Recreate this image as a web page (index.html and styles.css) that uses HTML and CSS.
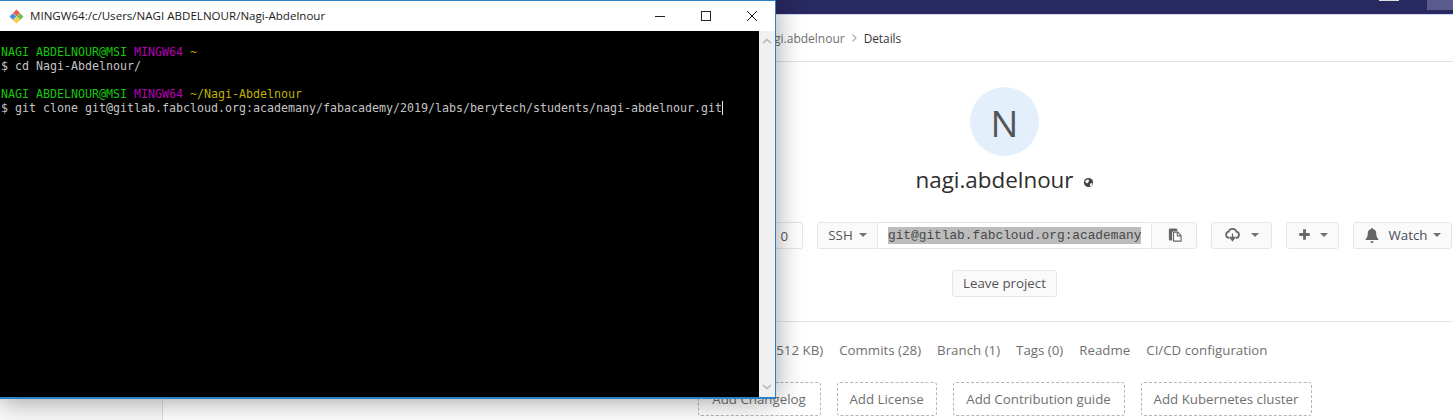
FILE: index.html
```html
<!DOCTYPE html>
<html lang="en">
<head>
<meta charset="utf-8">
<title>nagi.abdelnour · Details</title>
<link rel="stylesheet" href="styles.css">
</head>
<body>
<div class="desktop">
  <header class="navbar">
    <span class="nav-glint"></span>
    <span class="nav-avatar"></span>
  </header>
  <div class="layout">
    <aside class="sidebar"></aside>
    <main class="main">
      <nav class="crumbs">
        <span class="crumb">nagi.abdelnour</span>
        <svg class="crumb-sep" viewBox="0 0 8 10"><path d="M2.500 1.500 6 5 2.500 8.500" fill="none" stroke="#a5a5a5" stroke-width="1.100"/></svg>
        <strong class="crumb-current">Details</strong>
      </nav>
      <section class="hero">
        <div class="avatar">N</div>
        <h1 class="project-title">nagi.abdelnour
          <svg class="globe" viewBox="0 0 12 12"><circle cx="6" cy="6" r="5" fill="#444"/><path d="M3 3.500 6 2.500 6.500 5 4.500 7 2.500 5.500ZM8 7 10.500 6.500 9 10 7.500 9.500Z" fill="#fff"/></svg>
        </h1>
      </section>
      <div class="actions">
        <div class="group"><span class="btn">Star</span><span class="btn count">0</span></div>
        <div class="group"><span class="btn">Fork</span><span class="btn count">0</span></div>
        <div class="clone">
          <span class="btn ssh">SSH <i class="caret"></i></span>
          <span class="clone-url"><span class="selection">git@gitlab.fabcloud.org:academany</span></span>
          <span class="btn copy">
            <svg class="icon" viewBox="0 0 16 16"><path d="M2 3a1.500 1.500 0 0 1 1.500-1.500h6A1.500 1.500 0 0 1 11 3v1.500H7A1.500 1.500 0 0 0 5.500 6v8.500h-2A1.500 1.500 0 0 1 2 13Z" fill="#666"/><path d="M7 5.500h4.500L15 9v6H7Z" fill="#fff" stroke="#666" stroke-width="1.200"/><path d="M11 5.500V9.500h4" fill="none" stroke="#666" stroke-width="1.200"/></svg>
          </span>
        </div>
        <span class="btn cloud">
          <svg class="icon" viewBox="0 0 16 16"><path d="M4.500 11.500H4A3.300 3.300 0 0 1 3.800 5 4.500 4.500 0 0 1 12.300 5 3.300 3.300 0 0 1 12 11.500h-.5" fill="none" stroke="#666" stroke-width="1.900"/><path d="M8 7v5.500M5.500 11 8 14.500 10.500 11Z" fill="#666" stroke="#666" stroke-width="1.300"/></svg>
          <i class="caret"></i>
        </span>
        <span class="btn plus">
          <svg class="icon" viewBox="0 0 16 16"><path d="M8 2.500v11M2.500 8h11" fill="none" stroke="#666" stroke-width="3"/></svg>
          <i class="caret"></i>
        </span>
        <span class="btn watch">
          <svg class="icon bell" viewBox="0 0 16 16"><path d="M8 1a1 1 0 0 1 1 1c2.500.6 3.300 2.500 3.300 5 0 2.500 1 3.700 2 5v1H1.700v-1c1-1.300 2-2.500 2-5 0-2.500.8-4.400 3.300-5a1 1 0 0 1 1-1ZM6.300 14.200h3.400A1.700 1.700 0 0 1 6.300 14.200Z" fill="#666"/></svg>
          <span class="watch-label">Watch</span>
          <i class="caret"></i>
        </span>
      </div>
      <div class="leave"><span class="btn leave-btn">Leave project</span></div>
      <div class="stats">
        <ul class="stat-list">
          <li>Files (512 KB)</li>
          <li>Commits (28)</li>
          <li>Branch (1)</li>
          <li>Tags (0)</li>
          <li>Readme</li>
          <li>CI/CD configuration</li>
        </ul>
        <ul class="add-list">
          <li>Add Changelog</li>
          <li>Add License</li>
          <li>Add Contribution guide</li>
          <li>Add Kubernetes cluster</li>
        </ul>
      </div>
    </main>
  </div>

  <section class="window">
    <div class="titlebar">
      <svg class="git-logo" viewBox="0 0 16 16">
        <path d="M8 .5 11.700 4.200 8 8 4.300 4.200Z" fill="#e8604c"/>
        <path d="M4.100 4.400 7.800 8 4.100 11.700.5 8Z" fill="#4a8fe0"/>
        <path d="M11.900 4.400 15.500 8 11.900 11.700 8.200 8Z" fill="#74c04c"/>
        <path d="M8 8.200 11.700 11.900 8 15.500 4.300 11.900Z" fill="#f2cf45"/>
      </svg>
      <span class="window-title">MINGW64:/c/Users/NAGI ABDELNOUR/Nagi-Abdelnour</span>
      <div class="controls">
        <svg class="ctl" viewBox="0 0 12 12"><path d="M1 6.500h10" stroke="#222" stroke-width="1"/></svg>
        <svg class="ctl" viewBox="0 0 12 12"><rect x="1.500" y="1.500" width="9" height="9" fill="none" stroke="#222"/></svg>
        <svg class="ctl" viewBox="0 0 12 12"><path d="M1 1l10 10M11 1 1 11" stroke="#222" stroke-width="1"/></svg>
      </div>
    </div>
    <div class="term-wrap">
<pre class="terminal">

<span class="g">NAGI ABDELNOUR@MSI</span> <span class="m">MINGW64</span> <span class="y">~</span>
$ cd Nagi-Abdelnour/

<span class="g">NAGI ABDELNOUR@MSI</span> <span class="m">MINGW64</span> <span class="y">~/Nagi-Abdelnour</span>
$ git clone git@gitlab.fabcloud.org:academany/fabacademy/2019/labs/berytech/students/nagi-abdelnour.git<span class="cursor"></span></pre>
      <div class="scrollbar">
        <svg class="chev" viewBox="0 0 10 6"><path d="M1 5 5 1.500 9 5" fill="none" stroke="#b5b5b5" stroke-width="1.600"/></svg>
        <svg class="chev" viewBox="0 0 10 6"><path d="M1 1 5 4.500 9 1" fill="none" stroke="#b5b5b5" stroke-width="1.600"/></svg>
      </div>
    </div>
  </section>
</div>
</body>
</html>
```
FILE: styles.css
```css
* { box-sizing: border-box; }
html, body { margin: 0; height: 420px; overflow: hidden; background: #fff; }
body { font-family: "Open Sans", "Liberation Sans", sans-serif; font-size: 13.3px; color: #5c5c5c; }
.desktop { position: relative; width: 1453px; height: 420px; overflow: hidden; }

.navbar { height: 15px; background: #292961; border-bottom: 1px solid #d5d6f0; display: flex; justify-content: flex-end; align-items: flex-start; }
.nav-glint { width: 20px; height: 1px; background: #ddd; margin-right: 28px; }
.nav-avatar { width: 26px; height: 10px; background: #5a5a8c; }

.layout { display: flex; height: 405px; }
.sidebar { width: 163px; flex: none; background: #fafafa; border-right: 1px solid #e0e0e0; }
.main { flex: 1; min-width: 0; }

.crumbs { height: 47px; border-bottom: 1px solid #e3e3e3; display: flex; align-items: center; padding-left: 597px; font-size: 12px; }
.crumb { color: #707070; }
.crumb-sep { width: 8px; height: 10px; margin: 0 6px 0 5px; }
.crumb-current { color: #333; font-weight: 500; font-size: 11.800px; }

.hero { padding: 25px 0 0 393px; display: flex; flex-direction: column; align-items: center; }
.avatar { width: 69px; height: 69px; border-radius: 50%; background: #e3f0fb; color: #555; font-size: 37px; line-height: 71px; text-align: center; }
.project-title { margin: 9px 0 1px; font-size: 22.400px; font-weight: 400; line-height: 30px; color: #2e2e2e; display: flex; align-items: center; gap: 9px; }
.globe { width: 11px; height: 11px; margin-top: 5px; }

.actions { display: flex; justify-content: flex-end; gap: 14px; margin-top: 26px; padding-right: 1px; height: 27px; }
.btn { display: inline-flex; align-items: center; justify-content: center; height: 27px; padding-bottom: 2px; border: 1px solid #e6e6e6; border-radius: 3px; background: #fafafa; color: #555; white-space: nowrap; }
.group { display: flex; }
.group .btn { padding: 0 12px 0; border-radius: 3px 0 0 3px; }
.group .count { background: #fff; border-left: 0; border-radius: 0 3px 3px 0; padding-right: 14px; }
.caret { display: inline-block; width: 0; height: 0; border-style: solid; border-width: 4px 4.500px 0; border-color: #707070 transparent transparent; }
.icon { width: 15px; height: 15px; flex: none; }
.bell { width: 16px; height: 16px; }

.clone { display: flex; width: 380px; height: 27px; }
.ssh { width: 61px; gap: 6px; border-radius: 3px 0 0 3px; flex: none; }
.clone-url { flex: 1; border-top: 1px solid #e6e6e6; border-bottom: 1px solid #e6e6e6; background: #fff; display: flex; align-items: center; padding-left: 10px; font-family: "Liberation Mono", monospace; font-size: 12.800px; color: #484848; }
.selection { background: #bcbcbc; line-height: 17px; }
.copy { width: 46px; flex: none; border-radius: 0 3px 3px 0; }
.cloud { width: 61px; gap: 11px; }
.plus { width: 53px; gap: 8px; }
.watch { width: 99px; gap: 6px; color: #4a4a5a; }
.watch-label { margin-left: 3px; }

.leave { display: flex; justify-content: center; padding-left: 393px; margin-top: 21px; }
.leave-btn { width: 105px; }

.stats { margin-top: 24px; border-top: 1px solid #e5e5e5; padding: 18px 0 0 393px; }
.stat-list, .add-list { list-style: none; margin: 0; padding: 0; }
.stat-list { display: flex; justify-content: center; gap: 16px; line-height: 20px; color: #707070; white-space: nowrap; }
.add-list { display: grid; grid-template-columns: 123px 100px 172px 171px; justify-content: center; gap: 16px; margin-top: 22px; color: #707070; white-space: nowrap; }
.add-list li { height: 34px; line-height: 32px; text-align: center; border: 1px dashed #b5b5b5; border-radius: 3px; }

.window { position: absolute; left: 0; top: 0; width: 776px; height: 399px; background: #fff; border: solid #2b82c9; border-width: 1px 1.500px 2px 0; box-shadow: 0 2px 26px rgba(0, 0, 0, .38); display: flex; flex-direction: column; }
.titlebar { height: 30px; flex: none; display: flex; align-items: center; padding-left: 9px; background: #fff; }
.git-logo { width: 15px; height: 15px; flex: none; }
.window-title { margin: -2px 0 0 6px; font-size: 11.570px; color: #1a1a1a; white-space: nowrap; }
.controls { margin-left: auto; display: flex; gap: 34px; padding-right: 17px; }
.ctl { width: 12px; height: 12px; display: block; }

.term-wrap { flex: 1; display: flex; min-height: 0; }
.terminal { flex: 1; margin: 0; padding: 0 0 0 1px; background: #000; color: #c4c4c4; font-family: "DejaVu Sans Mono", monospace; font-size: 11.630px; line-height: 14px; overflow: hidden; white-space: pre; }
.g { color: #16c60c; }
.m { color: #b400b4; }
.y { color: #bfb000; }
.cursor { display: inline-block; width: 1px; height: 14px; background: #e8e8e8; vertical-align: top; }
.scrollbar { width: 16px; flex: none; background: #f0f0f0; display: flex; flex-direction: column; justify-content: space-between; align-items: center; padding: 7px 0; }
.chev { width: 10px; height: 6px; display: block; }
```
